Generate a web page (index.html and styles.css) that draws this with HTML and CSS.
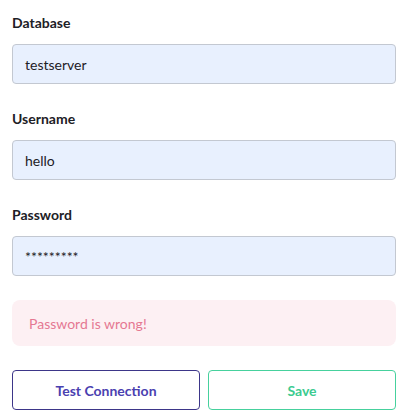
FILE: index.html
```html
<!DOCTYPE html>
<html lang="en">
<head>
<meta charset="utf-8">
<title>Connection</title>
<link rel="stylesheet" href="styles.css">
</head>
<body>
<form class="form">
  <div class="field">
    <label class="label">Database</label>
    <div class="input">testserver</div>
  </div>
  <div class="field">
    <label class="label">Username</label>
    <div class="input">hello</div>
  </div>
  <div class="field">
    <label class="label">Password</label>
    <div class="input input-pw">*********</div>
  </div>
  <div class="error">Password is wrong!</div>
  <div class="actions">
    <button type="button" class="btn btn-test">Test Connection</button>
    <button type="button" class="btn btn-save">Save</button>
  </div>
</form>
</body>
</html>
```
FILE: styles.css
```css
html, body {
  margin: 0;
  padding: 0;
  background: #ffffff;
}
body {
  font-family: Lato, "Open Sans", sans-serif;
  color: #1d2026;
}
.form {
  display: flex;
  flex-direction: column;
  gap: 24px;
  padding: 12px 8px 12px 12px;
}
.field {
  display: flex;
  flex-direction: column;
  gap: 10px;
}
.label {
  font-size: 14px;
  line-height: 22px;
  font-weight: 700;
  color: #1d2026;
}
.input {
  box-sizing: border-box;
  height: 40px;
  display: flex;
  align-items: center;
  padding: 0 12px;
  background: #e8f0fe;
  border: 1px solid #c3c8d1;
  border-radius: 4px;
  font-size: 14px;
  color: #1d2026;
}
.input-pw {
  letter-spacing: 0;
}
.error {
  box-sizing: border-box;
  height: 46px;
  display: flex;
  align-items: center;
  padding: 0 17px;
  background: #fdf0f3;
  border-radius: 8px;
  font-size: 14px;
  color: #e57892;
}
.actions {
  display: flex;
  gap: 8px;
}
.btn {
  flex: 1;
  box-sizing: border-box;
  height: 40px;
  background: #ffffff;
  border-radius: 4px;
  font-family: Lato, "Open Sans", sans-serif;
  font-size: 14px;
  font-weight: 700;
  cursor: pointer;
}
.btn-test {
  border: 1px solid #3d3689;
  color: #4a40b0;
}
.btn-save {
  border: 1px solid #46d19d;
  color: #3ccb90;
}
```
